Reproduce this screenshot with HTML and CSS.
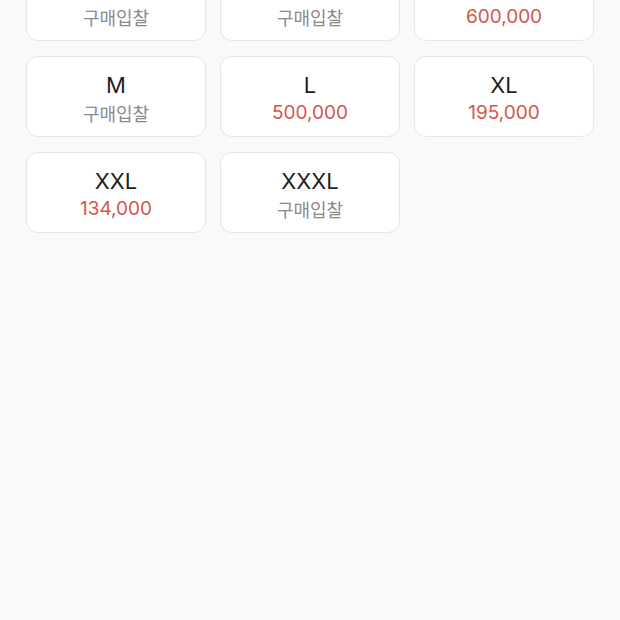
FILE: index.html
```html
<!DOCTYPE html>
<html lang="ko">
<head>
	<meta charset="UTF-8">
	<title>사이즈 선택</title>
	<link rel="stylesheet" href="styles.css">
</head>
<body>
	<div class="size_list">
		<div class="size_item">
			<div class="size">XS</div>
			<div class="price none">구매입찰</div>
		</div>
		<div class="size_item">
			<div class="size">S</div>
			<div class="price none">구매입찰</div>
		</div>
		<div class="size_item">
			<div class="size">FREE</div>
			<div class="price">600,000</div>
		</div>
		<div class="size_item">
			<div class="size">M</div>
			<div class="price none">구매입찰</div>
		</div>
		<div class="size_item">
			<div class="size">L</div>
			<div class="price">500,000</div>
		</div>
		<div class="size_item">
			<div class="size">XL</div>
			<div class="price">195,000</div>
		</div>
		<div class="size_item">
			<div class="size">XXL</div>
			<div class="price">134,000</div>
		</div>
		<div class="size_item">
			<div class="size">XXXL</div>
			<div class="price none">구매입찰</div>
		</div>
	</div>
</body>
</html>
```
FILE: styles.css
```css
*{
	padding: 0;
	margin: 0;
	box-sizing: border-box;
}
html, body{
	height: 100%;
}
body{
	background: #f9f9f9;
	font-family: Inter, "Noto Sans CJK KR", sans-serif;
	overflow: hidden;
}
/* 위로 스크롤된 상태 */
.size_list{
	display: grid;
	grid-template-columns: repeat(3, 180px);
	grid-auto-rows: 81px;
	column-gap: 14px;
	row-gap: 15px;
	padding: 0 26px;
	margin-top: -40px;
}
.size_item{
	background: #fff;
	border: 1px solid #e6e6e6;
	border-radius: 12px;
	display: flex;
	flex-direction: column;
	align-items: center;
	justify-content: center;
	padding-top: 4px;
}
.size{
	font-size: 22px;
	line-height: 28px;
	margin-bottom: 1px;
	color: #1f1f1f;
}
.price{
	font-size: 19px;
	line-height: 26px;
	color: #d5564b;
}
.price.none{
	color: #8a8a8a;
	font-family: "Noto Sans CJK KR", sans-serif;
	font-size: 18px;
}
```
